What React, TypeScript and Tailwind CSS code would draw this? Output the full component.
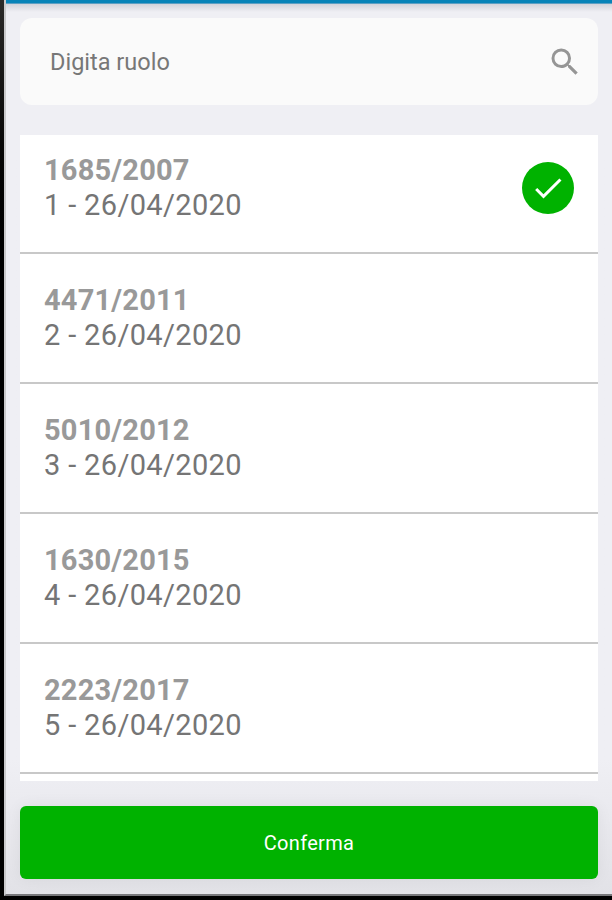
import { useState } from 'react'
import { MdCheck, MdSearch } from 'react-icons/md'

const ruoli = [
  { code: '1685/2007', label: '1 - 26/04/2020' },
  { code: '4471/2011', label: '2 - 26/04/2020' },
  { code: '5010/2012', label: '3 - 26/04/2020' },
  { code: '1630/2015', label: '4 - 26/04/2020' },
  { code: '2223/2017', label: '5 - 26/04/2020' },
]

export default function App() {
  const [selected, setSelected] = useState('1685/2007')

  return (
    <div className="h-[900px] w-[612px] overflow-hidden bg-linear-to-b from-[#2b2a29] to-black to-30% pb-[4px] pl-[4px] font-[Roboto,sans-serif]">
      <div className="flex h-full flex-col border-b-2 border-l-2 border-b-[#77777a] border-l-[#c9c9cb] bg-linear-to-b from-[#efeff4] from-85% to-[#e2e2e7] shadow-[0_4px_0_#000]">
        {/* App bar edge and its shadow */}
        <div className="h-[3px] shrink-0 bg-[#0783b8]" />
        <div className="h-px shrink-0 bg-[#5c9fc3]" />
        <div className="h-2 shrink-0 bg-linear-to-b from-[#d2d3da] to-[#efeff4]" />

        <div className="flex flex-1 flex-col pt-1.5 pr-[14px] pl-[14px]">
          {/* Search */}
          <div className="flex h-[87px] shrink-0 items-center justify-between rounded-xl bg-[#fafafa] pr-[15px] pl-[30px]">
            <input
              type="text"
              placeholder="Digita ruolo"
              className="w-80 bg-transparent pt-0.5 text-[23.5px] text-[#777] outline-none placeholder:text-[#777]"
            />
            <MdSearch className="size-9 text-[#959595]" />
          </div>

          {/* List */}
          <div className="mt-[30px] h-[646px] shrink-0 overflow-hidden bg-white">
            {ruoli.map((ruolo) => (
              <div
                key={ruolo.code}
                onClick={() => setSelected(ruolo.code)}
                className="flex h-[130px] items-start justify-between border-b-2 border-[#c8c8c8] pt-[29px] pr-6 pl-6 first:h-[119px] first:pt-[18px]"
              >
                <div className="text-[29px] leading-[34.5px]">
                  <p className="font-bold tracking-[0.2px] text-[#999]">{ruolo.code}</p>
                  <p className="tracking-[0.35px] text-[#757575]">{ruolo.label}</p>
                </div>
                {selected === ruolo.code && (
                  <div className="mt-[9px] flex size-[52px] items-center justify-center rounded-full bg-[#00b200] text-white">
                    <MdCheck className="size-9" />
                  </div>
                )}
              </div>
            ))}
          </div>

          <button className="mt-[25px] h-[73px] shrink-0 rounded-md bg-[#00b200] text-[20px] tracking-[0.3px] text-white shadow-[0_0_16px_rgba(0,0,0,0.06)]">
            Conferma
          </button>
        </div>
      </div>
    </div>
  )
}
